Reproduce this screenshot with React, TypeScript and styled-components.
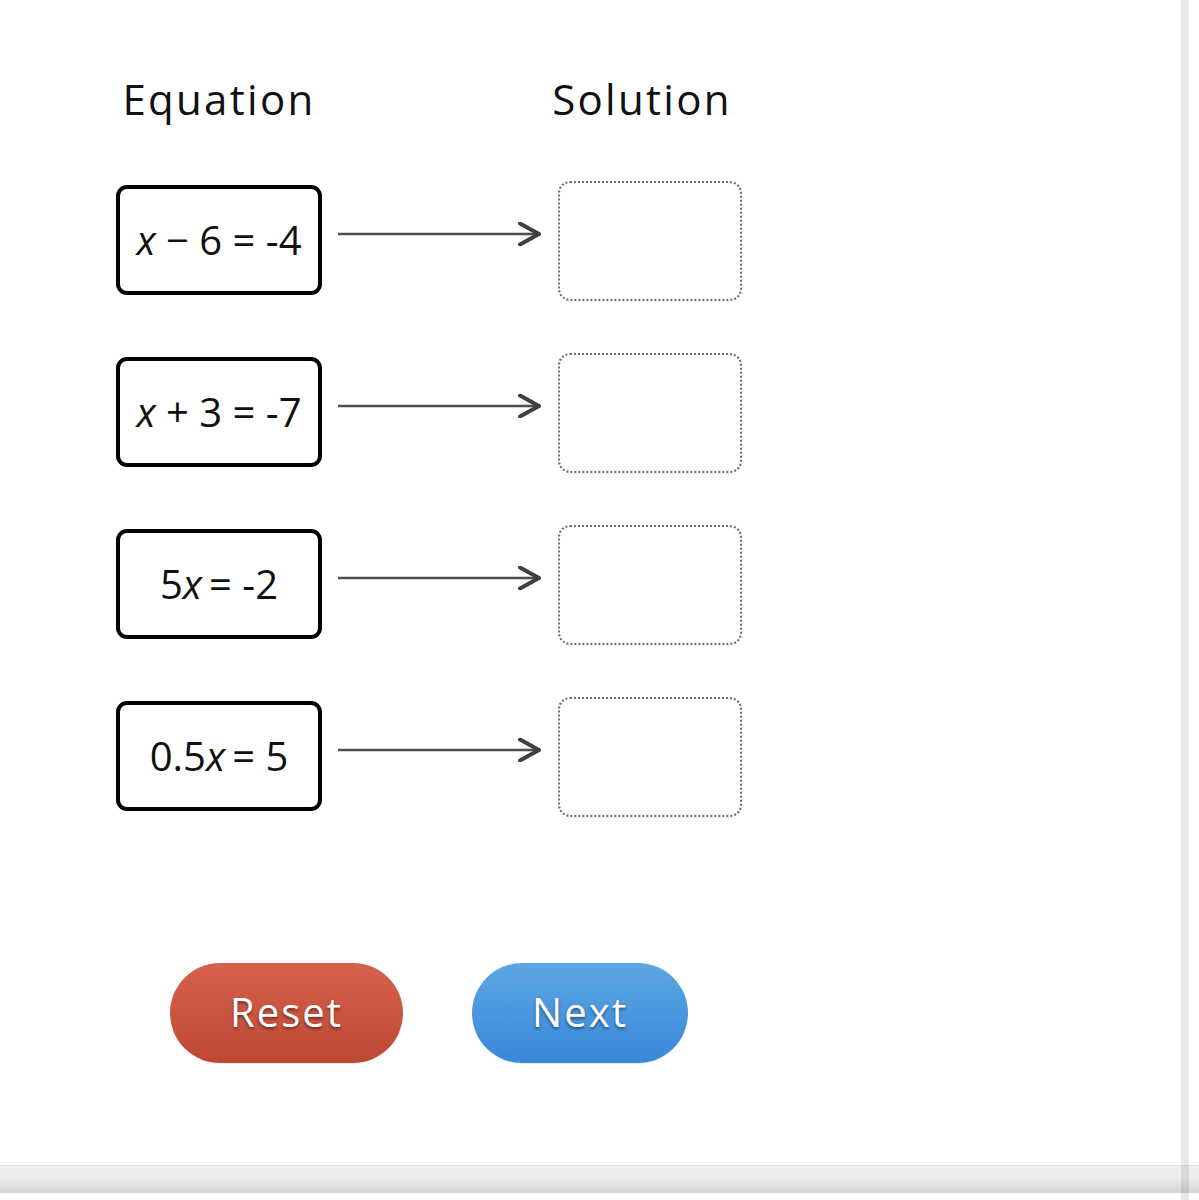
import React from 'react';
import styled, { createGlobalStyle } from 'styled-components';

const GlobalStyle = createGlobalStyle`
  html, body {
    margin: 0;
    padding: 0;
    background: #ffffff;
  }
  body {
    font-family: 'Open Sans', 'Noto Sans', sans-serif;
    color: #111111;
  }
`;

const Var = styled.i<{ after?: number }>`
  font-style: italic;
  margin-right: ${({ after }) => after ?? 0}px;
`;

interface Row {
  id: string;
  render: () => React.ReactNode;
}

const rows: Row[] = [
  {
    id: 'r1',
    render: () => (
      <>
        <Var>x</Var>&nbsp;−&nbsp;6&nbsp;=&nbsp;-4
      </>
    ),
  },
  {
    id: 'r2',
    render: () => (
      <>
        <Var>x</Var>&nbsp;+&nbsp;3&nbsp;=&nbsp;-7
      </>
    ),
  },
  {
    id: 'r3',
    render: () => (
      <>
        5<Var after={7}>x</Var>=&nbsp;-2
      </>
    ),
  },
  {
    id: 'r4',
    render: () => (
      <>
        0.5<Var after={7}>x</Var>=&nbsp;5
      </>
    ),
  },
];

const Arrow: React.FC = () => (
  <ArrowSvg width="204" height="24" viewBox="0 0 204 24">
    <line x1="0" y1="12" x2="202" y2="12" stroke="#4d4d4d" strokeWidth="2.5" />
    <polyline
      points="182,1.5 201,12 182,22.5"
      fill="none"
      stroke="#3f3f3f"
      strokeWidth="4"
      strokeLinecap="round"
      strokeLinejoin="round"
    />
  </ArrowSvg>
);

const App: React.FC = () => {
  return (
    <>
      <GlobalStyle />
      <Page>
        <Content>
          <Board>
            <Heading>Equation</Heading>
            <span />
            <Heading shift={-8}>Solution</Heading>
            {rows.map((row) => (
              <React.Fragment key={row.id}>
                <EquationCard>{row.render()}</EquationCard>
                <ArrowCell>
                  <Arrow />
                </ArrowCell>
                <DropSlot />
              </React.Fragment>
            ))}
          </Board>
          <Actions>
            <PillButton tone="red" width={233}>
              Reset
            </PillButton>
            <PillButton tone="blue" width={216}>
              Next
            </PillButton>
          </Actions>
        </Content>
        <BottomBar />
        <SideRule />
      </Page>
    </>
  );
};

const Page = styled.div`
  position: relative;
  height: 1200px;
  display: flex;
  flex-direction: column;
  overflow: hidden;
`;

const Content = styled.main`
  flex: 1;
  padding: 74px 0 0 116px;
`;

const Board = styled.div`
  display: grid;
  grid-template-columns: 206px 204px 184px;
  grid-template-rows: 55px;
  grid-auto-rows: 120px;
  column-gap: 16px;
  row-gap: 52px;
  align-items: center;

  & > :nth-child(-n + 3) {
    align-self: start;
  }
`;

const Heading = styled.h2<{ shift?: number }>`
  margin: 0;
  font-size: 42px;
  line-height: 50px;
  font-weight: 400;
  letter-spacing: 2.3px;
  color: #111;
  text-align: center;
  transform: translateX(${({ shift }) => shift ?? 0}px);
`;

const EquationCard = styled.div`
  box-sizing: border-box;
  height: 110px;
  margin-bottom: 2px;
  border: 4px solid #000;
  border-radius: 11px;
  display: flex;
  align-items: center;
  justify-content: center;
  font-size: 40px;
  color: #111;
  white-space: nowrap;
  padding-bottom: 2px;
`;

const ArrowCell = styled.div`
  display: flex;
  align-items: center;
  height: 100%;
  padding-bottom: 14px;
  box-sizing: border-box;
`;

const ArrowSvg = styled.svg`
  display: block;
`;

const DropSlot = styled.div`
  box-sizing: border-box;
  height: 120px;
  border: 2px dotted #6f6f6f;
  border-radius: 12px;
`;

const Actions = styled.div`
  display: flex;
  gap: 69px;
  margin: 146px 0 0 54px;
`;

const PillButton = styled.button<{ tone: 'red' | 'blue'; width: number }>`
  width: ${({ width }) => width}px;
  height: 100px;
  border: none;
  border-radius: 50px;
  font-family: 'Open Sans', 'Noto Sans', sans-serif;
  font-size: 40px;
  letter-spacing: 2px;
  color: #fff;
  text-shadow: 0 2px 3px rgba(0, 0, 0, 0.45);
  cursor: pointer;
  padding: 0 0 4px;
  background: ${({ tone }) =>
    tone === 'red'
      ? 'linear-gradient(#d6624c, #c95541 50%, #bd4933)'
      : 'linear-gradient(#5ba7e2, #4a97de 50%, #3987d9)'};
  box-shadow: 0 1px 1px rgba(0, 0, 0, 0.08);
`;

const BottomBar = styled.div`
  height: 28px;
  margin-bottom: 7px;
  border-top: 1px solid #e2e2e2;
  background: linear-gradient(#f0f0f0, #ececec 45%, #d3d3d3);
  box-sizing: border-box;
`;

const SideRule = styled.div`
  position: absolute;
  top: 0;
  bottom: 0;
  left: 1181px;
  width: 8px;
  background: rgba(0, 0, 0, 0.085);
`;

export default App;
